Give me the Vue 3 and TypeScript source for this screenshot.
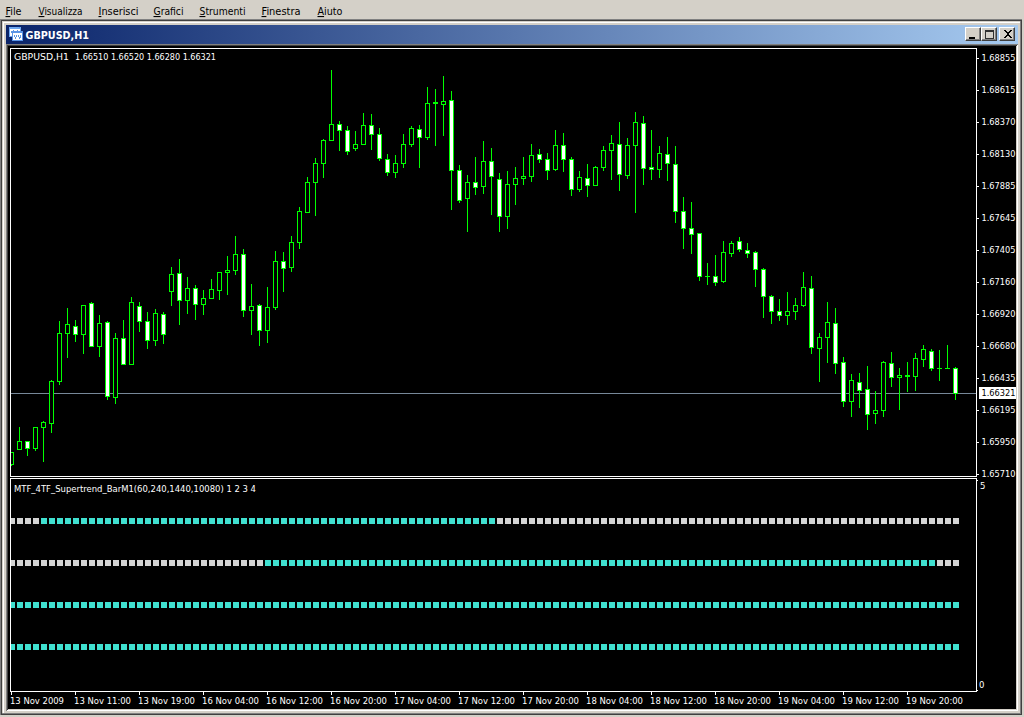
<script setup lang="ts">
type Candle = [high: number, top: number, bottom: number, low: number, filled: 0 | 1]

interface MenuEntry {
  key: string
  rest: string
}

const menu: MenuEntry[] = [
  { key: 'F', rest: 'ile' },
  { key: 'V', rest: 'isualizza' },
  { key: 'I', rest: 'nserisci' },
  { key: 'G', rest: 'rafici' },
  { key: 'S', rest: 'trumenti' },
  { key: 'F', rest: 'inestra' },
  { key: 'A', rest: 'iuto' },
]
const menuWidths = [16, 44, 40, 30, 46, 39, 25]

// Pixel rows on the price pane; bottom and low are exclusive.
const candles: Candle[] = [
  [452, 452, 465, 466, 0], [427, 441, 450, 450, 0], [441, 441, 449, 456, 1], [427, 427, 449, 451, 0],
  [421, 422, 428, 462, 0], [380, 381, 424, 433, 0], [321, 333, 382, 385, 0], [308, 324, 334, 358, 0],
  [320, 326, 335, 342, 1], [305, 305, 335, 354, 0], [302, 303, 347, 347, 1], [315, 323, 347, 357, 0],
  [321, 322, 397, 400, 1], [333, 338, 398, 404, 0], [320, 338, 365, 365, 1], [297, 302, 365, 365, 0],
  [302, 306, 322, 332, 1], [312, 321, 341, 349, 1], [309, 313, 341, 346, 0], [312, 314, 335, 344, 1],
  [267, 274, 292, 306, 0], [259, 273, 301, 325, 1], [277, 288, 301, 314, 0], [285, 288, 305, 320, 1],
  [290, 298, 305, 315, 0], [279, 289, 299, 299, 0], [272, 272, 291, 300, 0], [256, 270, 273, 295, 0],
  [236, 254, 271, 275, 0], [249, 254, 311, 317, 1], [284, 306, 311, 335, 0], [304, 305, 331, 346, 1],
  [287, 307, 331, 343, 0], [251, 261, 308, 310, 0], [252, 261, 269, 292, 1], [236, 242, 268, 272, 0],
  [207, 211, 243, 249, 0], [177, 182, 213, 213, 0], [158, 163, 183, 216, 0], [139, 140, 164, 178, 0],
  [70, 124, 141, 141, 0], [121, 124, 131, 151, 1], [126, 130, 152, 155, 1], [131, 144, 149, 151, 0],
  [113, 125, 145, 145, 0], [114, 125, 135, 150, 1], [128, 134, 159, 161, 1], [154, 159, 173, 176, 1],
  [155, 163, 173, 178, 0], [134, 144, 164, 168, 0], [126, 128, 145, 147, 0], [125, 129, 138, 168, 1],
  [87, 103, 138, 140, 0], [89, 102, 104, 146, 0], [76, 101, 105, 136, 0], [91, 100, 171, 210, 1],
  [165, 170, 201, 203, 1], [175, 182, 199, 232, 0], [157, 182, 188, 195, 1], [141, 161, 187, 194, 0],
  [148, 161, 177, 215, 1], [173, 179, 217, 232, 1], [171, 184, 217, 229, 0], [167, 178, 185, 205, 0],
  [157, 176, 179, 185, 0], [144, 155, 177, 182, 0], [149, 154, 160, 163, 1], [153, 159, 171, 180, 1],
  [130, 145, 170, 171, 0], [133, 145, 160, 172, 1], [157, 159, 190, 196, 1], [171, 177, 190, 192, 0],
  [164, 178, 186, 197, 1], [166, 167, 186, 186, 0], [146, 150, 168, 171, 0], [135, 143, 151, 180, 0],
  [122, 144, 175, 191, 1], [138, 145, 176, 179, 0], [112, 122, 146, 213, 0], [116, 123, 169, 185, 1],
  [130, 167, 170, 180, 1], [146, 153, 170, 178, 0], [137, 154, 164, 181, 1], [146, 164, 212, 223, 1],
  [197, 211, 229, 249, 1], [202, 228, 235, 254, 1], [233, 233, 277, 281, 1], [263, 276, 277, 285, 0],
  [255, 276, 283, 286, 1], [241, 252, 282, 283, 0], [241, 243, 254, 257, 0], [237, 241, 250, 252, 1],
  [243, 250, 254, 258, 1], [251, 252, 270, 287, 1], [268, 269, 297, 318, 1], [295, 296, 312, 324, 1],
  [299, 311, 316, 321, 1], [292, 311, 316, 325, 0], [298, 305, 312, 320, 0], [272, 287, 306, 307, 0],
  [276, 288, 348, 354, 1], [333, 337, 349, 382, 0], [302, 322, 338, 363, 0], [308, 323, 364, 374, 1],
  [357, 362, 402, 407, 1], [374, 380, 402, 417, 0], [373, 382, 391, 408, 1], [366, 389, 415, 430, 1],
  [391, 410, 414, 424, 0], [361, 362, 411, 417, 0], [352, 363, 378, 387, 1], [368, 375, 378, 410, 0],
  [362, 375, 377, 392, 0], [353, 358, 377, 391, 0], [345, 349, 360, 367, 0], [349, 351, 369, 371, 1],
  [350, 368, 369, 381, 0], [345, 368, 369, 369, 0], [367, 368, 394, 400, 1],
]

const centerX = (i: number): number => 11 + i * 8

const prices: string[] = [
  '1.68855', '1.68615', '1.68370', '1.68130', '1.67885', '1.67645', '1.67405',
  '1.67160', '1.66920', '1.66680', '1.66435', '1.66195', '1.65950', '1.65710',
]

const times: string[] = [
  '13 Nov 2009', '13 Nov 11:00', '13 Nov 19:00', '16 Nov 04:00', '16 Nov 12:00',
  '16 Nov 20:00', '17 Nov 04:00', '17 Nov 12:00', '17 Nov 20:00', '18 Nov 04:00',
  '18 Nov 12:00', '18 Nov 20:00', '19 Nov 04:00', '19 Nov 12:00', '19 Nov 20:00',
]

// Each row is turquoise from index `from` up to and including `to`.
const trendRows = [
  { y: 518, from: 4, to: 60 },
  { y: 560, from: 32, to: 115 },
  { y: 602, from: 0, to: 118 },
  { y: 644, from: 0, to: 118 },
]
</script>

<template>
  <div class="desk">
    <nav class="menu">
      <svg v-for="(m, i) in menu" :key="i" class="entry" :width="menuWidths[i] + 2" height="19">
        <text x="0.5" y="15" :textLength="menuWidths[i]" lengthAdjust="spacingAndGlyphs"><tspan class="key">{{ m.key }}</tspan>{{ m.rest }}</text>
      </svg>
    </nav>

    <section class="window">
      <header class="title">
        <svg class="logo" width="14" height="14" shape-rendering="crispEdges">
          <rect x="0" y="0" width="12" height="10" fill="#6fa8f0" />
          <rect x="1" y="2" width="10" height="7" fill="#fff" />
          <path d="M2 4h1v2h-1zM4 3h1v2h-1zM6 5h1v1h-1zM8 3h1v1h-1zM10 0h1v1h-1z" fill="#5b95e0" />
          <rect x="3" y="4" width="11" height="10" fill="#5a94e6" />
          <rect x="4" y="6" width="9" height="7" fill="#fff" />
          <path d="M5 8h1v2h-1zM6 10h1v2h-1zM7 8h1v2h-1zM9 8h1v2h-1zM10 10h1v2h-1zM11 8h1v3h-1z" fill="#5b95e0" />
        </svg>
        <svg class="caption" width="70" height="19">
          <text x="0.5" y="14" textLength="63.5" lengthAdjust="spacingAndGlyphs">GBPUSD,H1</text>
        </svg>
        <div class="buttons">
          <button class="btn" aria-label="Minimize">
            <svg width="12" height="10" shape-rendering="crispEdges"><rect x="2" y="8" width="6" height="2" /></svg>
          </button>
          <button class="btn" aria-label="Maximize">
            <svg width="12" height="10" shape-rendering="crispEdges">
              <path d="M2 1h9v9h-9zM3 3v6h7v-6z" fill-rule="evenodd" fill="#303030" />
            </svg>
          </button>
          <button class="btn close" aria-label="Close">
            <svg width="12" height="10" shape-rendering="crispEdges">
              <path d="M3 1h2v1h1v1h2v-1h1v-1h2v1h-1v1h-1v1h-1v2h1v1h1v1h1v1h-2v-1h-1v-1h-2v1h-1v1h-2v-1h1v-1h1v-1h1v-2h-1v-1h-1v-1h-1z" />
            </svg>
          </button>
        </div>
      </header>

      <div class="client">
        <svg class="chart" width="1008" height="663" viewBox="8 46 1008 663">
          <g shape-rendering="crispEdges">
            <rect x="11" y="393" width="966" height="1" fill="#778899" />
            <g v-for="(c, i) in candles" :key="i">
              <rect :x="centerX(i)" :y="c[0]" width="1" :height="c[3] - c[0]" fill="#00ff00" />
              <rect :x="centerX(i) - 2" :y="c[1]" width="5" :height="c[2] - c[1]" fill="#00ff00" />
              <rect
                v-if="c[2] - c[1] > 2"
                :x="centerX(i) - 1"
                :y="c[1] + 1"
                width="3"
                :height="c[2] - c[1] - 2"
                :fill="c[4] ? '#ffffff' : '#000000'"
              />
            </g>
            <template v-for="row in trendRows" :key="row.y">
              <rect
                v-for="(_, i) in candles"
                :key="i"
                :x="centerX(i) - 2"
                :y="row.y"
                width="6"
                height="6"
                :fill="i >= row.from && i <= row.to ? '#40e0d0' : '#d3d3d3'"
              />
            </template>
            <rect x="8" y="46" width="2" height="663" fill="#000" />
            <g fill="#fff">
              <rect x="10" y="48" width="967" height="1" />
              <rect x="10" y="48" width="1" height="429" />
              <rect x="10" y="476" width="967" height="1" />
              <rect x="976" y="48" width="1" height="429" />
              <rect x="10" y="478" width="967" height="1" />
              <rect x="10" y="478" width="1" height="214" />
              <rect x="10" y="691" width="967" height="1" />
              <rect x="976" y="478" width="1" height="214" />
              <rect x="977" y="480" width="1" height="1" />
              <rect x="977" y="690" width="1" height="1" />
              <rect v-for="(_, i) in prices" :key="i" x="977" :y="58 + i * 32" width="2" height="1" />
              <rect v-for="(_, i) in times" :key="i" :x="11 + i * 64" y="692" width="1" height="3" />
              <rect x="979" y="387" width="37" height="12" />
            </g>
          </g>
          <g class="labels">
            <text x="14" y="60" textLength="55" lengthAdjust="spacingAndGlyphs">GBPUSD,H1</text>
            <text x="75" y="60" textLength="141" lengthAdjust="spacingAndGlyphs">1.66510 1.66520 1.66280 1.66321</text>
            <text x="14" y="492" textLength="242" lengthAdjust="spacingAndGlyphs">MTF_4TF_Supertrend_BarM1(60,240,1440,10080) 1 2 3 4</text>
            <text v-for="(p, i) in prices" :key="p" x="981.5" :y="61 + i * 32" textLength="34" lengthAdjust="spacingAndGlyphs">{{ p }}</text>
            <text class="current" x="981.5" y="396" textLength="34" lengthAdjust="spacingAndGlyphs">1.66321</text>
            <text x="980" y="489">5</text>
            <text x="979" y="688">0</text>
            <text
              v-for="(t, i) in times"
              :key="t"
              :x="10 + i * 64"
              y="704"
              :textLength="i === 0 ? 54 : 57"
              lengthAdjust="spacingAndGlyphs"
            >{{ t }}</text>
          </g>
        </svg>
      </div>
    </section>
  </div>
</template>

<style>
body {
  margin: 0;
  overflow: hidden;
}
</style>

<style scoped>
.desk {
  box-sizing: border-box;
  width: 1024px;
  height: 717px;
  background: #d4d0c8;
  font-family: "DejaVu Sans Condensed", "DejaVu Sans", "Noto Sans", sans-serif;
}
.menu {
  display: grid;
  grid-template-columns: 33px 60px 55px 46px 62px 56px 60px;
  height: 19px;
  padding-left: 5px;
}
.entry {
  display: block;
  overflow: visible;
  font-size: 11px;
  fill: #000;
}
.key {
  text-decoration: underline;
}
.window {
  box-sizing: border-box;
  width: 1022px;
  height: 696px;
  padding: 6px 4px 4px 6px;
  background: #d4d0c8;
  box-shadow:
    inset 1px 1px 0 #808080,
    inset -1px -1px 0 #404040,
    inset 2px 2px 0 #404040,
    inset -2px -2px 0 #808080,
    inset 3px 3px 0 #d4d0c8,
    inset 4px 4px 0 #fff;
}
.title {
  display: flex;
  align-items: flex-start;
  box-sizing: border-box;
  width: 1012px;
  height: 19px;
  padding: 0 3px;
  background: linear-gradient(90deg, #0a246a, #a6caf0);
}
.logo {
  display: block;
  margin-top: 2px;
}
.caption {
  display: block;
  margin-left: 2px;
  font-size: 11px;
  font-weight: bold;
  fill: #fff;
}
.buttons {
  display: flex;
  margin: 2px 0 0 auto;
}
.btn {
  display: block;
  box-sizing: border-box;
  width: 16px;
  height: 14px;
  margin: 0;
  padding: 1px;
  border: 1px solid;
  border-color: #fff #404040 #404040 #fff;
  box-shadow: inset -1px -1px 0 #808080;
  border-radius: 0;
  background: #d4d0c8;
  line-height: 0;
}
.close {
  margin-left: 2px;
}
.client {
  box-sizing: border-box;
  width: 1012px;
  height: 667px;
  padding: 2px;
  background: #d4d0c8;
  box-shadow:
    inset 1px 1px 0 #808080,
    inset -1px -1px 0 #fff,
    inset 2px 2px 0 #404040;
}
.chart {
  display: block;
  background: #000;
}
.labels {
  font-size: 9.5px;
  fill: #fff;
}
.labels text {
  white-space: pre;
}
.labels .current {
  fill: #000;
}
</style>
